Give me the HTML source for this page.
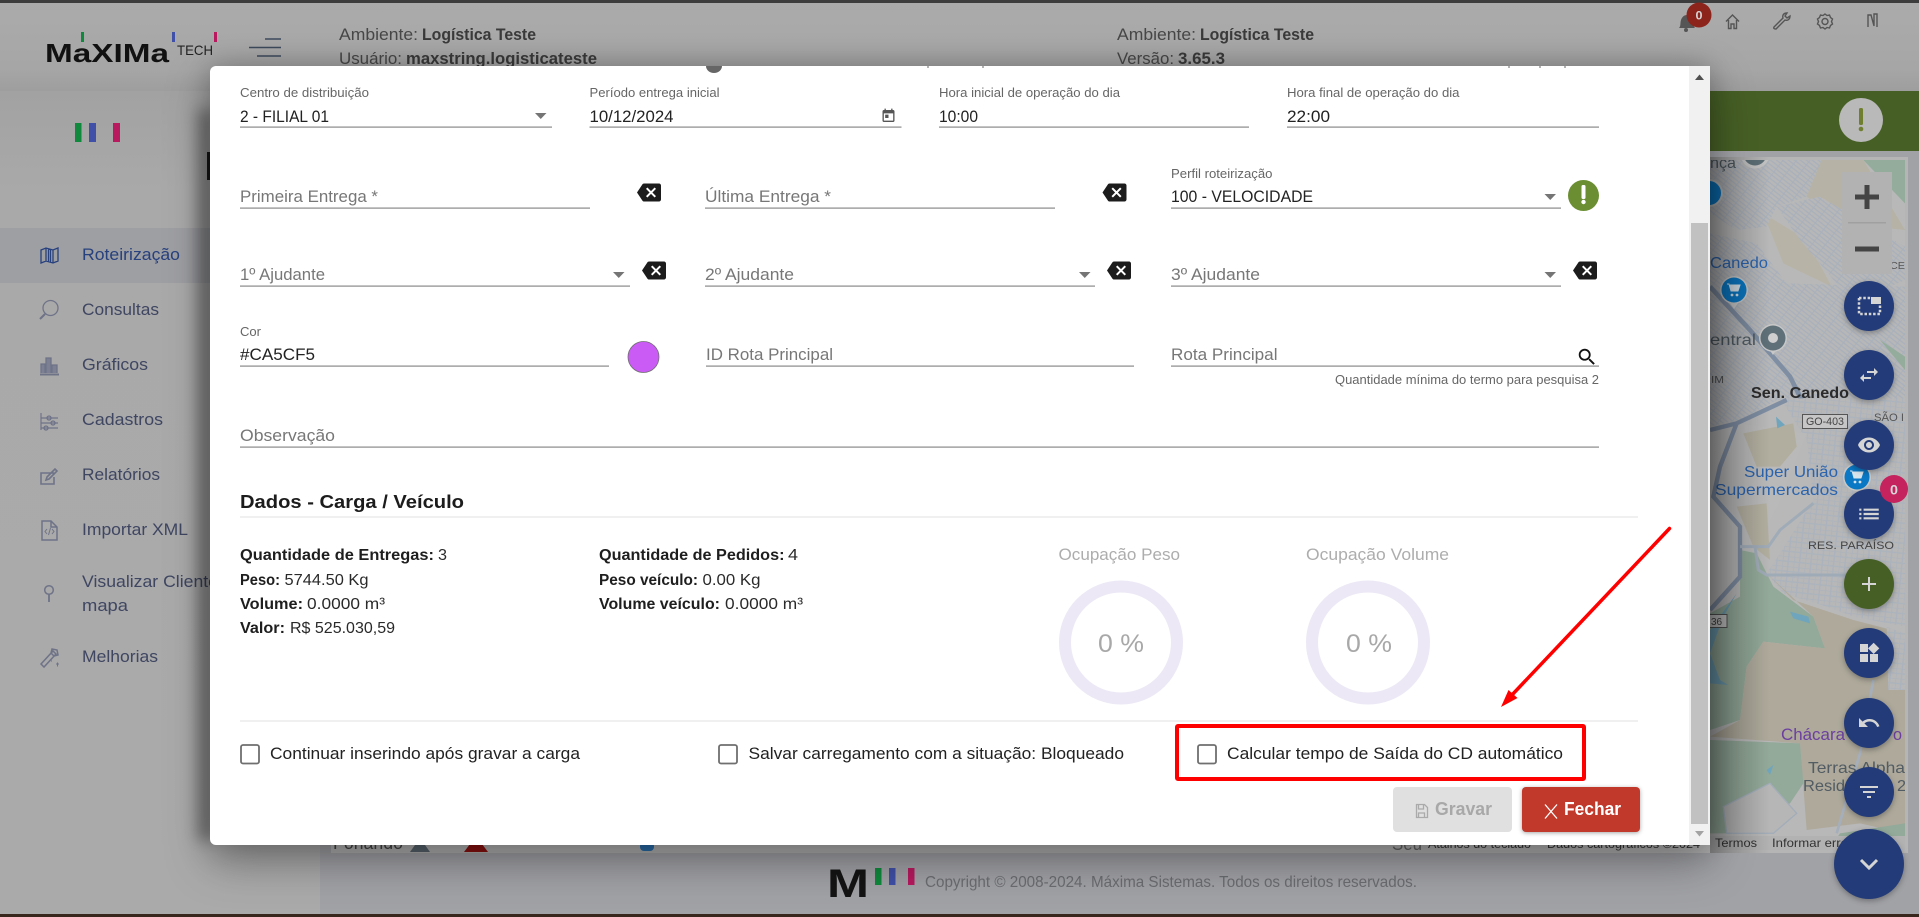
<!DOCTYPE html>
<html lang="pt-BR"><head><meta charset="utf-8"><title>Máxima</title>
<style>
html,body{margin:0;padding:0;background:#a5a5a5;overflow:hidden}
svg.p{display:block;position:absolute;left:0;top:0}
text{font-family:"Liberation Sans",sans-serif;white-space:pre}
.l{font-size:13px;fill:#666}
.v{font-size:17px;fill:#222}
.h{font-size:17px;fill:#777}
.b{font-size:16px;fill:#1e1e1e;font-weight:700}
.r{font-size:16px;fill:#2a2a2a}
.c{font-size:17px;fill:#222}
.s{font-size:16.5px;fill:#3f4662}
.t{font-size:16.5px;fill:#474747}
.tb{font-size:16.5px;fill:#3a3a3a;font-weight:700}
.m{font-size:16px;fill:#2b63ad}
.g{font-size:16px;fill:#515c63}
</style></head><body>
<svg class="p" xmlns="http://www.w3.org/2000/svg" width="1919" height="917" viewBox="0 0 1919 917">
<defs>
<linearGradient id="hd" x1="0" y1="0" x2="0" y2="1"><stop offset="0" stop-color="#ababab"/><stop offset=".75" stop-color="#a6a6a6"/><stop offset="1" stop-color="#9e9e9e"/></linearGradient>
<linearGradient id="sb" x1="0" y1="0" x2="0" y2="1"><stop offset="0" stop-color="#a2a2a2"/><stop offset=".12" stop-color="#a9a9a9"/><stop offset="1" stop-color="#aaaaaa"/></linearGradient>
<linearGradient id="ms" x1="0" y1="0" x2="1" y2="0"><stop offset="0" stop-color="#000" stop-opacity=".28"/><stop offset="1" stop-color="#000" stop-opacity="0"/></linearGradient>
<pattern id="s1" width="32" height="22" patternUnits="userSpaceOnUse" patternTransform="rotate(38)"><rect width="32" height="22" fill="#b7b7b7"/><path d="M0 0H32M0 11H32M0 22H32" stroke="#a8b0bb" stroke-width="4"/><path d="M0 0V22" stroke="#a8b0bb" stroke-width="5"/></pattern>
<pattern id="s2" width="34" height="30" patternUnits="userSpaceOnUse" patternTransform="rotate(6)"><rect width="34" height="30" fill="#b7b7b7"/><path d="M0 0H34M0 15H34" stroke="#abb3bd" stroke-width="4"/><path d="M0 0V30M17 0V30" stroke="#abb3bd" stroke-width="4"/></pattern>
<symbol id="bs" viewBox="0 0 24 24"><path fill="#1c1c1c" fill-rule="evenodd" d="M22 3H7c-.69 0-1.23.35-1.59.88L0 12l5.41 8.11c.36.53.9.89 1.59.89h15c1.1 0 2-.9 2-2V5c0-1.1-.9-2-2-2zm-3 12.59L17.59 17 14 13.41 10.41 17 9 15.59 12.59 12 9 8.41 10.41 7 14 10.59 17.59 7 19 8.41 15.41 12 19 15.59z"/></symbol>
<clipPath id="mc"><rect x="1710" y="160" width="195" height="690"/></clipPath>
</defs>

<!-- backgrounds -->
<rect width="1919" height="917" fill="#a1a2a6"/>
<rect y="91" width="320" height="826" fill="url(#sb)"/>
<rect y="3" width="1919" height="88" fill="url(#hd)"/>
<rect width="1919" height="3" fill="#3d3d3d"/>
<rect y="914" width="1919" height="3" fill="#38251c"/>

<!-- logo -->
<text x="45" y="62" font-size="26" font-weight="700" fill="#111" textLength="124" lengthAdjust="spacingAndGlyphs">MaXIMa</text>
<text x="177" y="55" font-size="14" fill="#222" textLength="36" lengthAdjust="spacingAndGlyphs">TECH</text>
<rect x="81" y="32" width="3" height="10" fill="#0f8a3c"/><rect x="172" y="32" width="3" height="10" fill="#4050a8"/><rect x="214" y="32" width="3" height="10" fill="#b8195f"/>
<path d="M265 39H281M249 47.5H281M257 56H281" stroke="#3d4a5c" stroke-width="1.6"/>

<!-- header text -->
<text class="t" x="339" y="40" textLength="79" lengthAdjust="spacingAndGlyphs">Ambiente:</text>
<text class="tb" x="422" y="40" textLength="114" lengthAdjust="spacingAndGlyphs">Logística Teste</text>
<text class="t" x="339" y="64" textLength="63" lengthAdjust="spacingAndGlyphs">Usuário:</text>
<text class="tb" x="406" y="64" textLength="191" lengthAdjust="spacingAndGlyphs">maxstring.logisticateste</text>
<text class="t" x="1117" y="40" textLength="79" lengthAdjust="spacingAndGlyphs">Ambiente:</text>
<text class="tb" x="1200" y="40" textLength="114" lengthAdjust="spacingAndGlyphs">Logística Teste</text>
<text class="t" x="1117" y="64" textLength="57" lengthAdjust="spacingAndGlyphs">Versão:</text>
<text class="tb" x="1178" y="64" textLength="47" lengthAdjust="spacingAndGlyphs">3.65.3</text>

<!-- top icons -->
<path d="M1679 28c2-2 1-5 2-8 1-3 3-5 6-5s5 2 6 5c1 3 0 6 2 8z" fill="#555"/><circle cx="1686" cy="30" r="2" fill="#555"/>
<circle cx="1699" cy="15" r="12.5" fill="#8d241b"/><text x="1695.5" y="19.5" font-size="12" font-weight="700" fill="#d4d4d4" textLength="7" lengthAdjust="spacingAndGlyphs">0</text>
<g fill="none" stroke="#555" stroke-width="1.4">
<path d="M1726 21.5l6.500-6.500 6.500 6.500M1728.5 20V28.500H1731V24H1734V28.500H1736.500V20"/>
<path d="M1774 27l9-9c-1-3 1-5 4-5l-2 3 2 2 3-2c0 3-2 5-5 4l-9 9q-3 0-2-2z"/>
<path d="M1825 14l2 1.500 2.500-.5 1 2.500 2 1.500-1 2.500 1 2.500-2 1.500-1 2.500-2.500-.5-2 1.500-2-1.500-2.500.5-1-2.500-2-1.500 1-2.500-1-2.500 2-1.500 1-2.500 2.500.5z"/><circle cx="1825" cy="21.500" r="3"/>
<path d="M1868 27V15h3l3 11V14h3v13"/>
</g>

<!-- sidebar -->
<rect x="0" y="228" width="320" height="55" fill="#9e9fa3"/>
<rect x="75" y="123" width="6.500" height="19" fill="#0f8a3c"/><rect x="89" y="123" width="7" height="19" fill="#4050a8"/><rect x="113" y="123" width="7" height="19" fill="#b8195f"/>
<rect x="207" y="152" width="4" height="28" fill="#1a1a1a"/>
<g fill="none" stroke="#27407e" stroke-width="1.300"><path d="M41 250l5-2 7 2 5-2v13l-5 2-7-2-5 2zM46 248v13M53 250v13M48.500 249v13M50.500 249.500v13"/></g>
<g fill="none" stroke="#6f7388" stroke-width="1.300">
<circle cx="50.500" cy="308" r="7.500"/><path d="M45 314l-5 5" stroke-width="2"/>
<path d="M40 374.500h19" stroke-width="2"/><path d="M41 373v-9h4v9M46 373v-15h5v15M52 373v-8h5v8" fill="#7d8093"/>
<path d="M41 413v17M41 418h17M41 423h17M41 428h17" stroke-width="1.200"/><circle cx="49" cy="418" r="2"/><circle cx="53" cy="423" r="2"/><circle cx="46" cy="428" r="2"/>
<path d="M54 473H41v11h13v-7M47 477l8-8 2 2-8 8-3 1z" stroke-width="1.600"/>
<path d="M42 521h9l6 6v13H42zM51 521v6h6" stroke-width="1.500"/><path d="M47 529l-2 2.500 2 2.500M52 529l2 2.500-2 2.500M50.500 528l-2 7" stroke-width="1"/>
<circle cx="49" cy="590" r="4.300" stroke-width="1.500"/><path d="M49 594v8" stroke-width="1.800"/>
<path d="M41 664l12-13 3 3-12 13zM52 649l5 1 1 5-4 1-3-3z" stroke-width="1.500"/><path d="M56 664h3M57.500 662.500v4M51 661h1" stroke-width="1"/>
</g>
<text class="s" style="fill:#27407e" x="82" y="260" textLength="98" lengthAdjust="spacingAndGlyphs">Roteirização</text>
<text class="s" x="82" y="315" textLength="77" lengthAdjust="spacingAndGlyphs">Consultas</text>
<text class="s" x="82" y="370" textLength="66" lengthAdjust="spacingAndGlyphs">Gráficos</text>
<text class="s" x="82" y="425" textLength="81" lengthAdjust="spacingAndGlyphs">Cadastros</text>
<text class="s" x="82" y="480" textLength="78" lengthAdjust="spacingAndGlyphs">Relatórios</text>
<text class="s" x="82" y="535" textLength="106" lengthAdjust="spacingAndGlyphs">Importar XML</text>
<text class="s" x="82" y="587" textLength="136" lengthAdjust="spacingAndGlyphs">Visualizar Cliente</text>
<text class="s" x="82" y="611" textLength="46" lengthAdjust="spacingAndGlyphs">mapa</text>
<text class="s" x="82" y="662" textLength="76" lengthAdjust="spacingAndGlyphs">Melhorias</text>

<!-- green bar -->
<rect x="320" y="91" width="1599" height="60" fill="#465f25"/>
<circle cx="1861" cy="120" r="22" fill="#b9b9b9"/>
<rect x="1859" y="108" width="4" height="17" rx="1.500" fill="#6f7f2f"/><circle cx="1861" cy="129" r="2.300" fill="#6f7f2f"/>

<!-- map frame -->
<rect x="331" y="157" width="1577" height="696" fill="#b5b5b5"/>
<rect x="331" y="160" width="1574" height="690" fill="#b8b8b8"/>
<text x="333" y="849" font-size="18" fill="#444" textLength="70" lengthAdjust="spacingAndGlyphs">Forlando</text>
<path d="M464 852l12-16 12 16z" fill="#8f1010"/>
<path d="M410 852l10-14 10 14z" fill="#5a6570"/>
<rect x="640" y="842" width="14" height="9" rx="4" fill="#2a6fb0"/>
<text x="1392" y="850" font-size="18" fill="#666" textLength="30" lengthAdjust="spacingAndGlyphs">Seu</text>
<text x="1428" y="848" font-size="12" fill="#333" textLength="103" lengthAdjust="spacingAndGlyphs">Atalhos do teclado</text>
<text x="1547" y="848" font-size="12" fill="#333" textLength="153" lengthAdjust="spacingAndGlyphs">Dados cartográficos ©2024</text>

<g clip-path="url(#mc)">
<!-- upper part, zoom-7 space -->
<g transform="translate(1640,100) scale(.33333)">
<polygon points="670,180 795,180 795,310" fill="#94ac9b"/>
<polygon points="500,180 670,180 795,390 700,380 560,330 500,290" fill="#b6b2a5"/>
<polygon points="370,340 500,420 575,560 430,490" fill="#b7b3a6"/>
<polygon points="210,180 545,180 500,290 410,320 380,380 290,390 210,340" fill="url(#s1)"/>
<polygon points="410,320 540,290 795,440 795,540 640,610 480,420" fill="url(#s1)"/>
<polygon points="210,400 350,430 440,550 795,560 795,900 210,900" fill="url(#s1)"/>
<polygon points="720,720 795,770 795,810" fill="#94ac9b"/>
<path d="M210 560L330 690 450 830 490 910" fill="none" stroke="#7f8ea3" stroke-width="14"/>
</g>
<!-- lower part, zoom-8 space -->
<g transform="translate(1640,400) scale(.33333)">
<polygon points="420,-5 795,-5 795,680 640,650 560,620 430,580 380,520 420,460 520,300 500,120" fill="url(#s2)"/>
<polygon points="210,-5 420,-5 300,60 210,80" fill="url(#s1)"/>
<polygon points="210,80 300,70 500,100 420,300 360,420 310,440 220,290" fill="#b9b9b9"/>
<polygon points="310,100 460,70 470,140 420,200 350,200" fill="#b2ae9f"/>
<polygon points="290,320 380,310 390,480 340,440" fill="#b2ae9f"/>
<polygon points="300,450 350,460 400,560 520,650 555,745 370,725 320,800 300,960 210,990 210,640 300,590" fill="#93a999"/>
<polygon points="380,520 460,600 640,660 795,700 795,1300 660,1270 500,1290 480,1030 210,1010 300,960 320,800 370,725 555,745 520,650" fill="#aea99b"/>
<polygon points="210,1020 480,1030 490,1150 450,1210 300,1300 210,1300" fill="#93a999"/>
<polygon points="600,1300 795,1270 795,1360 560,1360" fill="#93a999"/>
<polygon points="250,1220 390,1150 470,1240 400,1300 260,1300" fill="#b6b6b6" stroke="#a2adb9" stroke-width="4"/>
<polygon points="740,680 795,700 795,870 745,870" fill="url(#s2)"/>
<polygon points="210,690 290,580 250,650 210,760" fill="#6f9fb5"/>
<polygon points="210,760 240,840 265,855 210,850" fill="#6f9fb5"/>
<polygon points="450,635 505,650 510,670 460,655" fill="#6fa5bd"/>
<polygon points="408,50 435,75 412,85" fill="#6fa5bd"/>
<polygon points="380,1110 400,1095 390,1125" fill="#6fa5bd"/>
<path d="M210 90L290 70 440 0M290 70L240 200 220 290 300 380 300 530 210 630" fill="none" stroke="#7f8ea3" stroke-width="13"/>
<path d="M300 440H385L420 390 520 310M345 440L355 510 380 525H640" fill="none" stroke="#a0abb8" stroke-width="9"/>
<path d="M700 840L660 1060 590 1300" fill="none" stroke="#a5afbb" stroke-width="8"/>
</g>
<!-- pins -->
<circle cx="1755" cy="154" r="13" fill="#5f7078" stroke="#c4c4c4" stroke-width="3"/>
<circle cx="1709" cy="193" r="13" fill="#0a78c4" stroke="#c4c4c4" stroke-width="2"/>
<path d="M1728 300l6 9 6-9z" fill="#c8c8c8"/><circle cx="1734" cy="290" r="14" fill="#c8c8c8"/><circle cx="1734" cy="290" r="12.500" fill="#0a78c4"/>
<path d="M1727 284h2l2 7h7l2-6h-10" fill="#d8e4ec" stroke="#d8e4ec"/><circle cx="1732" cy="295" r="1.400" fill="#d8e4ec"/><circle cx="1737" cy="295" r="1.400" fill="#d8e4ec"/>
<path d="M1767 346l6 9 6-9z" fill="#c8c8c8"/><circle cx="1773" cy="338" r="14" fill="#c8c8c8"/><circle cx="1773" cy="338" r="12.500" fill="#5f7078"/><circle cx="1773" cy="338" r="5" fill="#cfcfcf"/>
<circle cx="1857" cy="477" r="14" fill="#c8c8c8"/><circle cx="1857" cy="477" r="12.500" fill="#0a78c4"/>
<path d="M1850 471h2l2 7h7l2-6h-10" fill="#d8e4ec" stroke="#d8e4ec"/><circle cx="1855" cy="482" r="1.400" fill="#d8e4ec"/><circle cx="1860" cy="482" r="1.400" fill="#d8e4ec"/>
<!-- labels -->
<text class="g" x="1710" y="168" textLength="26" lengthAdjust="spacingAndGlyphs">nça</text>
<text class="m" x="1710" y="268" textLength="58" lengthAdjust="spacingAndGlyphs">Canedo</text>
<text class="g" x="1710" y="345" textLength="46" lengthAdjust="spacingAndGlyphs">entral</text>
<text x="1751" y="398" font-size="16" font-weight="700" fill="#2b2b2b" textLength="98" lengthAdjust="spacingAndGlyphs">Sen. Canedo</text>
<text x="1890" y="269" font-size="10" fill="#555" textLength="15" lengthAdjust="spacingAndGlyphs">CE</text>
<text x="1711" y="383" font-size="10" fill="#555" textLength="13" lengthAdjust="spacingAndGlyphs">IM</text>
<text class="m" x="1744" y="477" textLength="94" lengthAdjust="spacingAndGlyphs">Super União</text>
<text class="m" x="1715" y="495" textLength="123" lengthAdjust="spacingAndGlyphs">Supermercados</text>
<rect x="1802.500" y="414.500" width="45" height="14" fill="#c6c6c6" stroke="#555"/>
<text x="1806" y="425" font-size="11" fill="#444" textLength="38" lengthAdjust="spacingAndGlyphs">GO-403</text>
<text x="1874" y="421" font-size="11" fill="#555" textLength="30" lengthAdjust="spacingAndGlyphs">SÃO I</text>
<text x="1808" y="549" font-size="11" fill="#444" textLength="86" lengthAdjust="spacingAndGlyphs">RES. PARAÍSO</text>
<rect x="1708" y="614.500" width="19" height="13" fill="#c6c6c6" stroke="#555"/>
<text x="1711" y="625" font-size="10" fill="#444">36</text>
<text x="1781" y="740" font-size="17" fill="#6b3fa0" textLength="64" lengthAdjust="spacingAndGlyphs">Chácara</text>
<text x="1893" y="740" font-size="17" fill="#6b3fa0" textLength="9" lengthAdjust="spacingAndGlyphs">o</text>
<text class="g" x="1808" y="773" textLength="97" lengthAdjust="spacingAndGlyphs">Terras Alpha</text>
<text class="g" x="1803" y="791" textLength="42" lengthAdjust="spacingAndGlyphs">Resid</text>
<text class="g" x="1897" y="791" textLength="9" lengthAdjust="spacingAndGlyphs">2</text>
<rect x="1710" y="836" width="195" height="14" fill="#b2b2b2"/>
<text x="1715" y="847" font-size="12" fill="#333" textLength="42" lengthAdjust="spacingAndGlyphs">Termos</text>
<text x="1772" y="847" font-size="12" fill="#333" textLength="76" lengthAdjust="spacingAndGlyphs">Informar erro</text>
</g>
<rect x="1710" y="157" width="60" height="696" fill="url(#ms)"/>

<!-- zoom control -->
<rect x="1842" y="172" width="50" height="102" fill="#b2b2b2"/>
<rect x="1848" y="222" width="38" height="1.500" fill="#a0a0a0"/>
<path d="M1855 197h24M1867 185v24" stroke="#444" stroke-width="5"/>
<path d="M1855 249h24" stroke="#444" stroke-width="5"/>

<!-- footer -->
<text x="827" y="897" font-size="40" font-weight="700" fill="#141414" textLength="42" lengthAdjust="spacingAndGlyphs">M</text>
<rect x="875" y="868" width="6.500" height="17" fill="#0f8a3c"/><rect x="889" y="868" width="6.500" height="17" fill="#4050a8"/><rect x="908" y="868" width="6.500" height="17" fill="#b8195f"/>
<text x="925" y="887" font-size="16" fill="#6c6d71" textLength="492" lengthAdjust="spacingAndGlyphs">Copyright © 2008-2024. Máxima Sistemas. Todos os direitos reservados.</text>

<!-- FABs -->
<g style="filter:drop-shadow(0 2px 3px rgba(0,0,0,.3))">
<circle cx="1869" cy="306" r="25" fill="#233b78"/><circle cx="1869" cy="375" r="25" fill="#233b78"/><circle cx="1869" cy="445" r="25" fill="#233b78"/><circle cx="1869" cy="514" r="25" fill="#233b78"/><circle cx="1869" cy="584" r="25" fill="#465f25"/><circle cx="1869" cy="653" r="25" fill="#233b78"/><circle cx="1869" cy="723" r="25" fill="#233b78"/><circle cx="1869" cy="792" r="25" fill="#233b78"/><circle cx="1869" cy="864" r="35" fill="#233b78"/>
</g>
<g fill="#d5d5d5">
<path d="M1859 298h13v0M1859 298v16h21v-9" fill="none" stroke="#d5d5d5" stroke-width="2.500" stroke-dasharray="2.500 1.800"/><rect x="1871" y="297" width="10" height="7"/>
<svg x="1857" y="363" width="24" height="24" viewBox="0 0 24 24"><path d="M6.99 11L3 15l3.990 4v-3H14v-2H6.990v-3zM21 9l-4-4v3h-7v2h7v3l4-4z"/></svg>
<svg x="1857" y="433" width="24" height="24" viewBox="0 0 24 24"><path d="M12 4.500C7 4.500 2.730 7.610 1 12c1.730 4.390 6 7.500 11 7.500s9.270-3.110 11-7.500c-1.730-4.390-6-7.500-11-7.500zM12 17c-2.760 0-5-2.240-5-5s2.240-5 5-5 5 2.240 5 5-2.240 5-5 5zm0-8c-1.660 0-3 1.340-3 3s1.340 3 3 3 3-1.340 3-3-1.340-3-3-3z"/></svg>
<svg x="1856" y="501" width="26" height="26" viewBox="0 0 24 24"><path d="M3 13h2v-2H3v2zm0 4h2v-2H3v2zm0-8h2V7H3v2zm4 4h14v-2H7v2zm0 4h14v-2H7v2zM7 7v2h14V7H7z"/></svg>
<svg x="1857" y="572" width="24" height="24" viewBox="0 0 24 24"><path d="M19 13h-6v6h-2v-6H5v-2h6V5h2v6h6v2z"/></svg>
<svg x="1857" y="641" width="24" height="24" viewBox="0 0 24 24"><path d="M13 13v8h8v-8h-8zM3 21h8v-8H3v8zM3 3v8h8V3H3zm13.660-1.310L11 7.340 16.660 13l5.660-5.660-5.660-5.650z"/></svg>
<svg x="1857" y="711" width="24" height="24" viewBox="0 0 24 24"><path d="M12.500 8c-2.650 0-5.050.990-6.900 2.600L2 7v9h9l-3.620-3.620c1.390-1.160 3.160-1.880 5.120-1.880 3.540 0 6.550 2.310 7.600 5.500l2.370-.780C21.080 11.030 17.150 8 12.500 8z"/></svg>
<svg x="1857" y="780" width="24" height="24" viewBox="0 0 24 24"><path d="M10 18h4v-2h-4v2zM3 6v2h18V6H3zm3 7h12v-2H6v2z"/></svg>
</g>
<path d="M1861 860l8 8 8-8" fill="none" stroke="#d5d5d5" stroke-width="3"/>
<circle cx="1894" cy="489" r="14" fill="#c4235e"/><text x="1890" y="494.500" font-size="14" font-weight="700" fill="#d8d8d8" textLength="8" lengthAdjust="spacingAndGlyphs">0</text>

<!-- modal -->
<rect x="198" y="110" width="16" height="730" fill="#000" opacity=".3" style="filter:blur(7px)"/>
<g style="filter:drop-shadow(0 16px 22px rgba(0,0,0,.3)) drop-shadow(0 0 14px rgba(0,0,0,.22))"><rect x="210" y="66" width="1500" height="779" rx="6" fill="#fff"/></g>
<rect x="1689" y="66" width="21" height="779" fill="#f1f1f1"/>
<rect x="1691" y="223" width="17" height="601" fill="#c1c1c1"/>
<path d="M1695 80h9l-4.500-5.500z" fill="#505050"/><path d="M1695 831h9l-4.500 5.500z" fill="#a3a3a3"/>
<path d="M706 66h16a8 7 0 0 1-16 0z" fill="#666"/>
<path d="M928 66v2M983 66v2M1509 66v2M1540 66v2M1565 66v2" stroke="#666"/>

<!-- row 1 -->
<text class="l" x="240" y="97" textLength="129" lengthAdjust="spacingAndGlyphs">Centro de distribuição</text>
<text class="l" x="589.500" y="97" textLength="130" lengthAdjust="spacingAndGlyphs">Período entrega inicial</text>
<text class="l" x="939" y="97" textLength="181" lengthAdjust="spacingAndGlyphs">Hora inicial de operação do dia</text>
<text class="l" x="1287" y="97" textLength="172.500" lengthAdjust="spacingAndGlyphs">Hora final de operação do dia</text>
<text class="v" x="240" y="122" textLength="89" lengthAdjust="spacingAndGlyphs">2 - FILIAL 01</text>
<text class="v" x="589.500" y="122" textLength="84" lengthAdjust="spacingAndGlyphs">10/12/2024</text>
<text class="v" x="939" y="122" textLength="39" lengthAdjust="spacingAndGlyphs">10:00</text>
<text class="v" x="1287" y="122" textLength="43" lengthAdjust="spacingAndGlyphs">22:00</text>
<g fill="#8a8a8a">
<rect x="240" y="126.500" width="312" height="1.200"/><rect x="589.500" y="126.500" width="312" height="1.200"/><rect x="939" y="126.500" width="310" height="1.200"/><rect x="1287" y="126.500" width="312" height="1.200"/>
<rect x="240" y="207.500" width="350" height="1.200"/><rect x="705" y="207.500" width="350" height="1.200"/><rect x="1171" y="207.500" width="390" height="1.200"/>
<rect x="240" y="285.500" width="390" height="1.200"/><rect x="705" y="285.500" width="390" height="1.200"/><rect x="1171" y="285.500" width="390" height="1.200"/>
<rect x="240" y="365.500" width="369" height="1.200"/><rect x="706" y="365.500" width="428" height="1.200"/><rect x="1171" y="365.500" width="428" height="1.200"/>
<rect x="240" y="446.500" width="1359" height="1.200"/>
</g>
<g fill="#757575">
<path d="M535 113h11.500l-5.750 6z"/><path d="M1544.500 194h11.500l-5.750 6z"/>
<path d="M613 272h11.500l-5.750 6z"/><path d="M1079 272h11.500l-5.750 6z"/><path d="M1544.500 272h11.500l-5.750 6z"/>
</g>
<svg x="880.500" y="108" width="16" height="16" viewBox="0 0 24 24"><path fill="#555" d="M19 3h-1V1h-2v2H8V1H6v2H5c-1.110 0-1.990.900-1.990 2L3 19c0 1.100.890 2 2 2h14c1.100 0 2-.900 2-2V5c0-1.100-.900-2-2-2zm0 16H5V8h14v11zM7 10h5v5H7z"/></svg>

<!-- row 2 -->
<text class="h" x="240" y="202" textLength="138" lengthAdjust="spacingAndGlyphs">Primeira Entrega *</text>
<text class="h" x="705" y="202" textLength="126" lengthAdjust="spacingAndGlyphs">Última Entrega *</text>
<text class="l" x="1171" y="178" textLength="101.500" lengthAdjust="spacingAndGlyphs">Perfil roteirização</text>
<text class="v" x="1171" y="202" textLength="142" lengthAdjust="spacingAndGlyphs">100 - VELOCIDADE</text>
<use href="#bs" x="637" y="180.500" width="24" height="24"/>
<use href="#bs" x="1102.500" y="180.500" width="24" height="24"/>
<circle cx="1583.500" cy="195.500" r="15.500" fill="#6b8e33"/>
<rect x="1581.500" y="185" width="4" height="14" rx="1.500" fill="#fff"/><circle cx="1583.500" cy="202" r="2.200" fill="#fff"/>

<!-- row 3 -->
<text class="h" x="240" y="280" textLength="85" lengthAdjust="spacingAndGlyphs">1º Ajudante</text>
<text class="h" x="705" y="280" textLength="89" lengthAdjust="spacingAndGlyphs">2º Ajudante</text>
<text class="h" x="1171" y="280" textLength="89" lengthAdjust="spacingAndGlyphs">3º Ajudante</text>
<use href="#bs" x="642" y="258.500" width="24" height="24"/>
<use href="#bs" x="1107" y="258.500" width="24" height="24"/>
<use href="#bs" x="1573" y="258.500" width="24" height="24"/>

<!-- row 4 -->
<text class="l" x="240" y="336" textLength="21" lengthAdjust="spacingAndGlyphs">Cor</text>
<text class="v" x="240" y="360" textLength="75" lengthAdjust="spacingAndGlyphs">#CA5CF5</text>
<circle cx="643.500" cy="357" r="15.500" fill="#CA5CF5" stroke="#6f6f6f" stroke-width=".8"/>
<text class="h" x="706" y="360" textLength="127" lengthAdjust="spacingAndGlyphs">ID Rota Principal</text>
<text class="h" x="1171" y="360" textLength="106.500" lengthAdjust="spacingAndGlyphs">Rota Principal</text>
<svg x="1576" y="346" width="22" height="22" viewBox="0 0 24 24"><path fill="#111" d="M15.500 14h-.790l-.280-.270C15.410 12.590 16 11.110 16 9.500 16 5.910 13.090 3 9.500 3S3 5.910 3 9.500 5.910 16 9.500 16c1.610 0 3.090-.590 4.230-1.570l.270.280v.790l5 4.990L20.490 19l-4.990-5zm-6 0C7.010 14 5 11.990 5 9.500S7.010 5 9.500 5 14 7.010 14 9.500 11.990 14 9.500 14z"/></svg>
<text x="1335" y="384" font-size="13" fill="#666" textLength="264" lengthAdjust="spacingAndGlyphs">Quantidade mínima do termo para pesquisa 2</text>
<text class="h" x="240" y="441" textLength="95" lengthAdjust="spacingAndGlyphs">Observação</text>

<!-- dados -->
<text x="240" y="508" font-size="18" font-weight="700" fill="#1c1c1c" textLength="224" lengthAdjust="spacingAndGlyphs">Dados - Carga / Veículo</text>
<rect x="240" y="516.500" width="1398" height="1" fill="#e0e0e0"/>
<text class="b" x="240" y="560" textLength="194" lengthAdjust="spacingAndGlyphs">Quantidade de Entregas:</text><text class="r" x="438" y="560" textLength="9" lengthAdjust="spacingAndGlyphs">3</text>
<text class="b" x="240" y="585" textLength="40" lengthAdjust="spacingAndGlyphs">Peso:</text><text class="r" x="284.500" y="585" textLength="84" lengthAdjust="spacingAndGlyphs">5744.50 Kg</text>
<text class="b" x="240" y="609" textLength="63" lengthAdjust="spacingAndGlyphs">Volume:</text><text class="r" x="307" y="609" textLength="78" lengthAdjust="spacingAndGlyphs">0.0000 m³</text>
<text class="b" x="240" y="633" textLength="45" lengthAdjust="spacingAndGlyphs">Valor:</text><text class="r" x="290" y="633" textLength="105" lengthAdjust="spacingAndGlyphs">R$ 525.030,59</text>
<text class="b" x="599" y="560" textLength="185.500" lengthAdjust="spacingAndGlyphs">Quantidade de Pedidos:</text><text class="r" x="788" y="560" textLength="10" lengthAdjust="spacingAndGlyphs">4</text>
<text class="b" x="599" y="585" textLength="99" lengthAdjust="spacingAndGlyphs">Peso veículo:</text><text class="r" x="702.500" y="585" textLength="58" lengthAdjust="spacingAndGlyphs">0.00 Kg</text>
<text class="b" x="599" y="609" textLength="121" lengthAdjust="spacingAndGlyphs">Volume veículo:</text><text class="r" x="725" y="609" textLength="78" lengthAdjust="spacingAndGlyphs">0.0000 m³</text>
<text x="1058.500" y="560" font-size="17" fill="#adadad" textLength="121.500" lengthAdjust="spacingAndGlyphs">Ocupação Peso</text>
<text x="1306" y="560" font-size="17" fill="#adadad" textLength="143" lengthAdjust="spacingAndGlyphs">Ocupação Volume</text>
<circle cx="1121" cy="642.500" r="56" fill="none" stroke="#ece8f5" stroke-width="12"/>
<circle cx="1368" cy="642.500" r="56" fill="none" stroke="#ece8f5" stroke-width="12"/>
<text x="1098" y="652" font-size="25" fill="#a8a8a8" textLength="46" lengthAdjust="spacingAndGlyphs">0 %</text>
<text x="1346" y="652" font-size="25" fill="#a8a8a8" textLength="46" lengthAdjust="spacingAndGlyphs">0 %</text>

<!-- options -->
<rect x="240" y="720.500" width="1398" height="1" fill="#e0e0e0"/>
<g fill="none" stroke="#6f6f6f" stroke-width="1.800"><rect x="241" y="745" width="18" height="18.500" rx="2"/><rect x="719" y="745" width="18" height="18.500" rx="2"/><rect x="1198" y="745" width="18" height="18.500" rx="2"/></g>
<text class="c" x="270" y="759" textLength="310" lengthAdjust="spacingAndGlyphs">Continuar inserindo após gravar a carga</text>
<text class="c" x="748.500" y="759" textLength="375.500" lengthAdjust="spacingAndGlyphs">Salvar carregamento com a situação: Bloqueado</text>
<text class="c" x="1227" y="759" textLength="336" lengthAdjust="spacingAndGlyphs">Calcular tempo de Saída do CD automático</text>
<rect x="1177" y="726" width="407" height="53" rx="1" fill="none" stroke="#f00" stroke-width="4"/>
<path d="M1669.500 528.500L1511 696" stroke="#f00" stroke-width="3.500" stroke-linecap="round"/>
<path d="M1501 707L1508.500 690L1517.500 698z" fill="#f00"/>

<!-- buttons -->
<rect x="1393" y="787" width="119" height="45" rx="4" fill="#e0e0e0"/>
<g style="filter:drop-shadow(0 1px 2px rgba(0,0,0,.35))"><rect x="1522" y="787" width="118" height="45" rx="4" fill="#c0392b"/></g>
<path d="M1416.500 804.500h8l3 3v10h-11zM1418.500 805v4h5v-4M1418.500 817v-4h6v4" fill="none" stroke="#aaa" stroke-width="1.300"/>
<text x="1435" y="815" font-size="18" font-weight="700" fill="#a8a8a8" textLength="57" lengthAdjust="spacingAndGlyphs">Gravar</text>
<path d="M1545 804.500l12 14M1557 804.500l-12 14" stroke="#fff" stroke-width="1.300"/>
<text x="1564" y="815" font-size="18" font-weight="700" fill="#fff" textLength="57" lengthAdjust="spacingAndGlyphs">Fechar</text>
</svg>
</body></html>
